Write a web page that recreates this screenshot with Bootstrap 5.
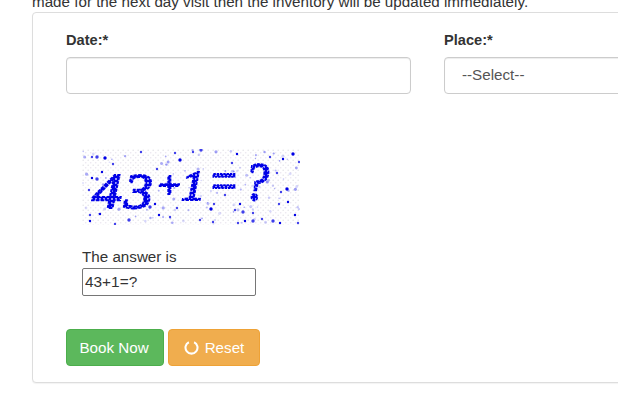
<!DOCTYPE html>
<html lang="en">
<head>
<meta charset="utf-8">
<title>Booking</title>
<link href="https://cdn.jsdelivr.net/npm/bootstrap@5.3.0/dist/css/bootstrap.min.css" rel="stylesheet">
<style>
html, body { height: 400px; overflow: hidden; background: #fff; }
body { font-family: "Liberation Sans", Arial, sans-serif; font-size: 15.2px; color: #333; }
.page-clip { width: 618px; height: 400px; overflow: hidden; padding-left: 32px; }
.intro-line { margin: -7px 0 0; height: 19px; line-height: 18px; white-space: nowrap; color: #333; }
.form-panel { width: 640px; height: 371px; border: 1px solid #ddd; border-radius: 4px; padding: 17px 0 0 33px; box-shadow: 0 1px 1px rgba(0,0,0,.05); --bs-card-border-color: #ddd; }
.field-date { flex: none; width: 345px; margin-right: 33px; }
.field-place { flex: none; width: 300px; }
.field-label { display: block; font-weight: 700; font-size: 14.6px; line-height: 20px; color: #333; margin-bottom: 7px; }
.field-box { height: 37px; border: 1px solid #ccc; border-radius: 4px; font-size: 15.2px; color: #555; box-shadow: inset 0 1px 1px rgba(0,0,0,.075); }
select.field-box { padding: 0 17px; background-image: none; }
.captcha-area { margin: 55px 0 0 16px; }
.captcha-pic { display: block; width: 218px; height: 76px; }
.captcha-glyphs { font-family: "Liberation Serif", serif; font-style: italic; fill: url(#chain); stroke: #0000e6; stroke-width: 1.8; stroke-dasharray: 3 1; }
.answer-label { margin-top: 22px; line-height: 20px; color: #333; }
.answer-input { display: block; width: 174px; height: 28px; padding: 0 2px; font-size: 15.4px; font-family: "Liberation Sans", sans-serif; color: #333; border: 1px solid #767676; border-radius: 2px; margin-top: 1px; }
.action-row { margin-top: 33px; gap: 4px; }
.btn-book, .btn-reset { flex: none; height: 37px; font-size: 15.2px; line-height: 1; border-radius: 4px; color: #fff; padding: 0; white-space: nowrap; display: inline-flex; align-items: center; justify-content: center; }
.btn-book { width: 98px; background: #5cb85c; border: 1px solid #4cae4c; padding-right: 2px; }
.btn-reset { width: 92px; background: #f0ad4e; border: 1px solid #eea236; gap: 6px; }
.btn-book:hover { background: #5cb85c; color: #fff; }
.btn-reset:hover { background: #f0ad4e; color: #fff; }
</style>
</head>
<body>
<div class="page-clip">
  <p class="intro-line">made for the next day visit then the inventory will be updated immediately.</p>
  <div class="card form-panel d-block">
    <div class="d-flex">
      <div class="field-date">
        <label class="field-label" for="bookdate">Date:*</label>
        <input id="bookdate" class="form-control field-box" type="text">
      </div>
      <div class="field-place">
        <label class="field-label" for="bookplace">Place:*</label>
        <select id="bookplace" class="form-select field-box"><option>--Select--</option></select>
      </div>
    </div>
    <div class="captcha-area">
      <svg class="captcha-pic" viewBox="0 0 218 76" role="img" aria-label="captcha">
        <defs>
          <pattern id="noise" width="5" height="5" patternUnits="userSpaceOnUse">
            <rect width="5" height="5" fill="#fff"/>
            <circle cx="1.2" cy="1.2" r=".8" fill="#e4e4e8"/>
            <circle cx="3.7" cy="3.7" r=".8" fill="#ece6f0"/>
          </pattern>
          <pattern id="chain" width="4" height="4" patternUnits="userSpaceOnUse">
            <rect width="4" height="4" fill="#0000e6"/>
            <circle cx="2" cy="2" r="1" fill="#c8c8ff"/>
          </pattern>
          <filter id="soften"><feGaussianBlur stdDeviation=".35"/></filter>
        </defs>
        <rect width="218" height="76" fill="url(#noise)"/>
        <g id="specks" fill="#0000e6" filter="url(#soften)"></g>
        <g class="captcha-glyphs" filter="url(#soften)">
          <text x="10" y="59" font-size="50" textLength="30" lengthAdjust="spacingAndGlyphs">4</text>
          <text x="42" y="59" font-size="50" textLength="29" lengthAdjust="spacingAndGlyphs">3</text>
          <text x="73" y="49" font-size="38" textLength="28" lengthAdjust="spacingAndGlyphs">+</text>
          <text x="99" y="51" font-size="42" textLength="24" lengthAdjust="spacingAndGlyphs">1</text>
          <text x="126" y="51" font-size="56" textLength="31" lengthAdjust="spacingAndGlyphs">=</text>
          <text x="162" y="51" font-size="54" textLength="25" lengthAdjust="spacingAndGlyphs">?</text>
        </g>
      </svg>
      <div class="answer-label">The answer is</div>
      <input class="answer-input" type="text" value="43+1=?">
    </div>
    <div class="d-flex action-row">
      <button type="button" class="btn btn-book">Book Now</button>
      <button type="button" class="btn btn-reset">
        <svg width="15" height="15" viewBox="0 0 16 16" fill="none" stroke="#fff" stroke-width="2.2"><path d="M5.2 2.4 A6.4 6.4 0 1 0 10.8 2.4"/></svg>
        Reset
      </button>
    </div>
  </div>
</div>
<script>
(function () {
  var dark = [[23,9],[93,4],[7,41],[10,29],[15,30],[8,66],[8,72],[33,75],[47,71],[77,66],[75,20],[59,3],[98,11],[95,59],[88,68],[73,55],[68,58],[31,15],[18,65],[10,8],[15,8],[20,23],
    [118,71],[132,55],[129,60],[131,73],[156,74],[163,72],[171,72],[171,64],[158,55],[153,61],[161,63],[201,10],[217,13],[195,24],[205,40],[199,43],[197,55],[198,74],[191,72],[180,70],[213,66],[111,3],[119,1],[155,5],[188,8],[150,14],[211,5],[216,74],[143,46],[206,53]];
  var s = 11, out = '';
  function r() { s = (s * 16807) % 2147483647; return s / 2147483647; }
  dark.forEach(function (p, i) {
    out += '<circle cx="' + p[0] + '" cy="' + p[1] + '" r="' + (i % 4 === 0 ? 1.7 : 1.2) + '" opacity="' + (i % 3 === 0 ? 1 : .75) + '"/>';
  });
  for (var i = 0; i < 110; i++) {
    out += '<circle cx="' + (r() * 216 + 1).toFixed(1) + '" cy="' + (r() * 74 + 1).toFixed(1) +
      '" r="' + (.7 + r() * .9).toFixed(1) + '" opacity="' + (.12 + r() * .3).toFixed(2) + '"/>';
  }
  document.getElementById('specks').innerHTML = out;
})();
</script>
<script src="https://cdn.jsdelivr.net/npm/bootstrap@5.3.0/dist/js/bootstrap.bundle.min.js"></script>
</body>
</html>
